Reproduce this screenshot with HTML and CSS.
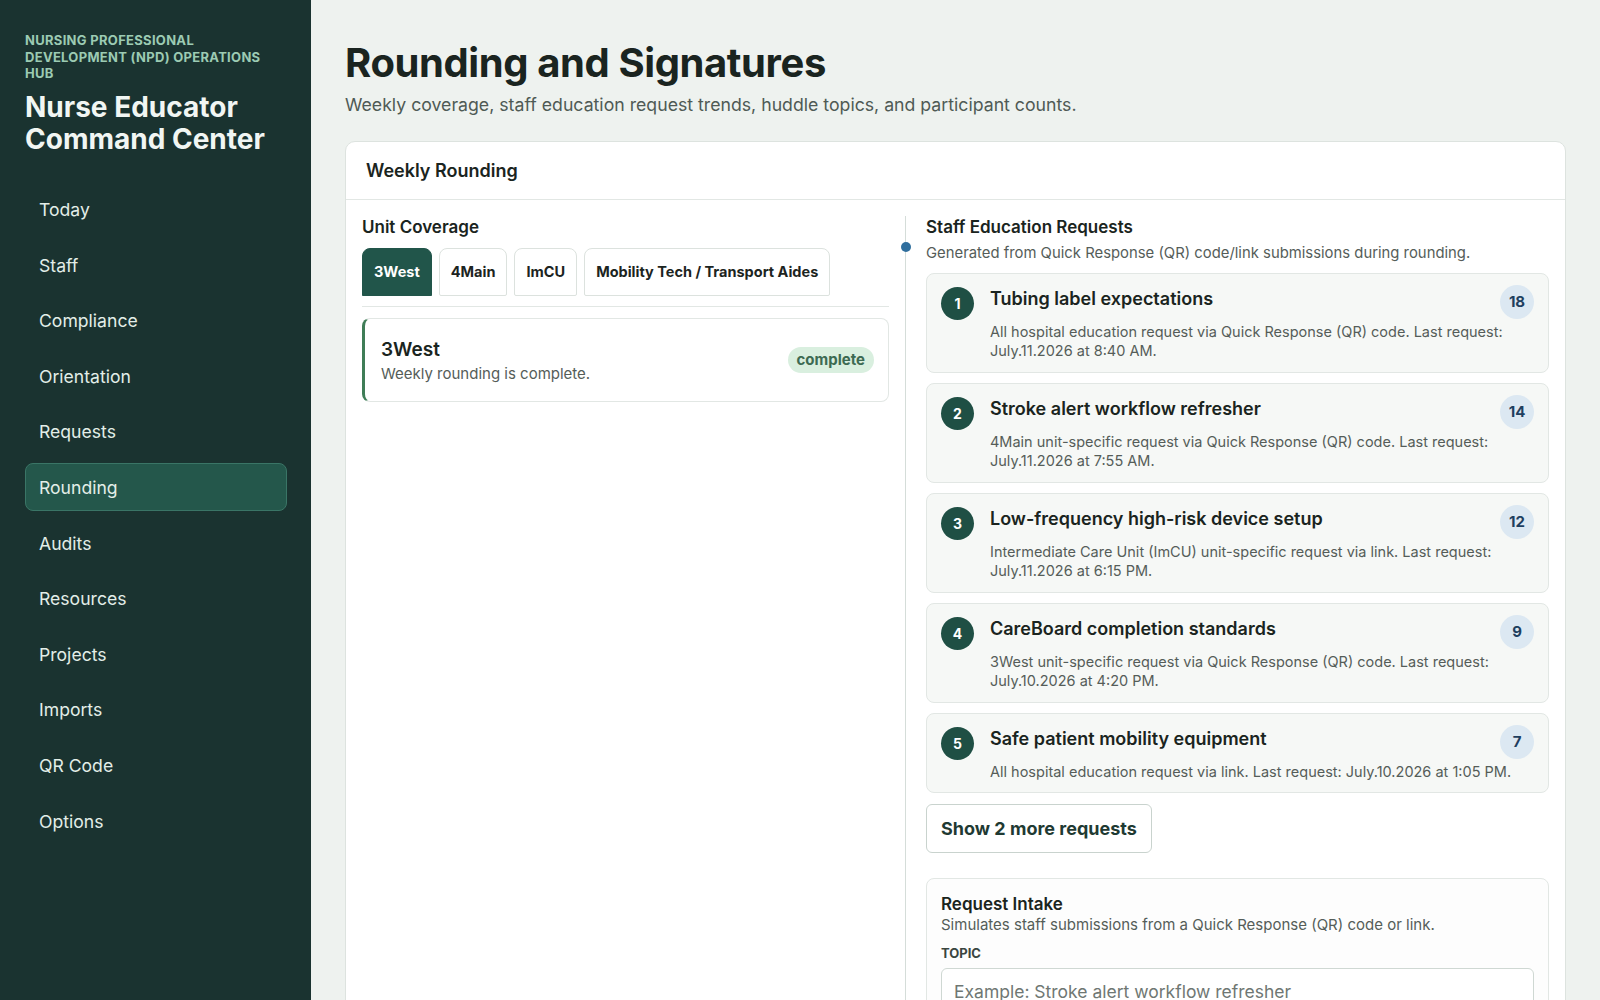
FILE: index.html
```html
<!DOCTYPE html>
<html lang="en">
<head>
    <meta charset="UTF-8">
    <meta name="viewport" content="width=device-width, initial-scale=1.0">
    <title>Rounding and Signatures</title>
    <link rel="stylesheet" href="styles.css">
</head>
<body>
    <aside class="sidebar">
        <div class="eyebrow">Nursing Professional Development (NPD) Operations Hub</div>
        <h1 class="brand">Nurse Educator Command Center</h1>
        <nav class="nav">
            <a class="nav-item">Today</a>
            <a class="nav-item">Staff</a>
            <a class="nav-item">Compliance</a>
            <a class="nav-item">Orientation</a>
            <a class="nav-item">Requests</a>
            <a class="nav-item active">Rounding</a>
            <a class="nav-item">Audits</a>
            <a class="nav-item">Resources</a>
            <a class="nav-item">Projects</a>
            <a class="nav-item">Imports</a>
            <a class="nav-item">QR Code</a>
            <a class="nav-item">Options</a>
        </nav>
    </aside>

    <main class="main">
        <h2 class="page-title">Rounding and Signatures</h2>
        <p class="page-sub">Weekly coverage, staff education request trends, huddle topics, and participant counts.</p>

        <section class="card">
            <div class="card-head">Weekly Rounding</div>
            <div class="card-body">
                <div class="coverage">
                    <h3 class="section-title">Unit Coverage</h3>
                    <div class="tabs">
                        <button class="tab active">3West</button>
                        <button class="tab">4Main</button>
                        <button class="tab">ImCU</button>
                        <button class="tab">Mobility Tech / Transport Aides</button>
                    </div>
                    <div class="unit">
                        <div>
                            <div class="unit-name">3West</div>
                            <div class="unit-note">Weekly rounding is complete.</div>
                        </div>
                        <span class="status">complete</span>
                    </div>
                </div>

                <div class="requests">
                    <span class="marker"></span>
                    <h3 class="section-title">Staff Education Requests</h3>
                    <p class="section-sub">Generated from Quick Response (QR) code/link submissions during rounding.</p>

                    <div class="req-list">
                        <div class="req">
                            <span class="rank">1</span>
                            <div class="req-body">
                                <div class="req-head"><h4>Tubing label expectations</h4><span class="count">18</span></div>
                                <p>All hospital education request via Quick Response (QR) code. Last request: July.11.2026 at 8:40 AM.</p>
                            </div>
                        </div>
                        <div class="req">
                            <span class="rank">2</span>
                            <div class="req-body">
                                <div class="req-head"><h4>Stroke alert workflow refresher</h4><span class="count">14</span></div>
                                <p>4Main unit-specific request via Quick Response (QR) code. Last request: July.11.2026 at 7:55 AM.</p>
                            </div>
                        </div>
                        <div class="req">
                            <span class="rank">3</span>
                            <div class="req-body">
                                <div class="req-head"><h4>Low-frequency high-risk device setup</h4><span class="count">12</span></div>
                                <p>Intermediate Care Unit (ImCU) unit-specific request via link. Last request: July.11.2026 at 6:15 PM.</p>
                            </div>
                        </div>
                        <div class="req">
                            <span class="rank">4</span>
                            <div class="req-body">
                                <div class="req-head"><h4>CareBoard completion standards</h4><span class="count">9</span></div>
                                <p>3West unit-specific request via Quick Response (QR) code. Last request: July.10.2026 at 4:20 PM.</p>
                            </div>
                        </div>
                        <div class="req">
                            <span class="rank">5</span>
                            <div class="req-body">
                                <div class="req-head"><h4>Safe patient mobility equipment</h4><span class="count">7</span></div>
                                <p>All hospital education request via link. Last request: July.10.2026 at 1:05 PM.</p>
                            </div>
                        </div>
                    </div>

                    <button class="more">Show 2 more requests</button>

                    <div class="intake">
                        <h3 class="section-title">Request Intake</h3>
                        <p class="intake-sub">Simulates staff submissions from a Quick Response (QR) code or link.</p>
                        <label class="field-label" for="topic">Topic</label>
                        <input class="field" id="topic" type="text" placeholder="Example: Stroke alert workflow refresher">
                    </div>
                </div>
            </div>
        </section>
    </main>
</body>
</html>
```

FILE: styles.css
```css
* {
    box-sizing: border-box;
}
body {
    margin: 0;
    display: flex;
    min-height: 100vh;
    background: #eef2ef;
    color: #1a2420;
    font-family: Inter, "Noto Sans", sans-serif;
}
h1, h2, h3, h4, p {
    margin: 0;
}

/* sidebar */
.sidebar {
    width: 311px;
    flex-shrink: 0;
    background: #1a3330;
    padding: 32px 24px 32px 25px;
}
.eyebrow {
    font-size: 13px;
    font-weight: 700;
    line-height: 16.5px;
    letter-spacing: 0.3px;
    text-transform: uppercase;
    color: #9ccbb3;
}
.brand {
    margin-top: 9px;
    font-size: 28px;
    font-weight: 700;
    line-height: 32px;
    color: #f1f6f3;
}
.nav {
    margin-top: 31px;
    display: flex;
    flex-direction: column;
    gap: 7.6px;
}
.nav-item {
    height: 48px;
    display: flex;
    align-items: center;
    padding: 0 13px;
    border: 1px solid transparent;
    border-radius: 8px;
    font-size: 17.6px;
    color: #e3eee8;
    cursor: pointer;
}
.nav-item.active {
    background: #24574b;
    border-color: #3a7566;
}

/* main area */
.main {
    flex: 1;
    padding: 39px 34px 40px 34px;
}
.page-title {
    font-size: 40px;
    font-weight: 700;
    line-height: 48px;
    letter-spacing: -0.4px;
}
.page-sub {
    margin-top: 6px;
    font-size: 17.7px;
    line-height: 24px;
    color: #4f5a55;
}
.card {
    margin-top: 24px;
    background: #fff;
    border: 1px solid #dde3df;
    border-radius: 10px;
}
.card-head {
    height: 58px;
    display: flex;
    align-items: center;
    padding: 0 20px;
    border-bottom: 1px solid #e2e7e4;
    font-size: 18px;
    font-weight: 600;
}
.card-body {
    display: grid;
    grid-template-columns: 527px 1fr;
    column-gap: 16px;
    padding: 16px 16px 0 16px;
}
.section-title {
    font-size: 17px;
    font-weight: 600;
    line-height: 22px;
}

/* unit coverage */
.tabs {
    display: flex;
    gap: 7px;
    margin-top: 9.5px;
    padding-bottom: 10px;
    border-bottom: 1px solid #e2e7e4;
}
.tab {
    height: 48px;
    padding: 0 11px;
    background: #fff;
    border: 1px solid #dce2de;
    border-radius: 8px 8px 2px 2px;
    font-family: inherit;
    font-size: 14.5px;
    font-weight: 700;
    color: #1c2421;
    cursor: pointer;
}
.tab.active {
    background: #21554a;
    border-color: #21554a;
    color: #fff;
    border-radius: 8px 8px 0 0;
}
.unit {
    margin-top: 11px;
    height: 84px;
    display: flex;
    align-items: center;
    justify-content: space-between;
    padding: 3px 14px 0 16px;
    border: 1px solid #e2e7e4;
    border-left: 3px solid #3f7d57;
    border-radius: 8px;
}
.unit-name {
    font-size: 19px;
    font-weight: 600;
    line-height: 24px;
}
.unit-note {
    margin-top: 1px;
    font-size: 15px;
    line-height: 21px;
    color: #555d59;
}
.status {
    margin-top: -3px;
    padding: 3px 9px;
    border-radius: 999px;
    background: #d9efdf;
    color: #3d6a52;
    font-size: 15px;
    font-weight: 700;
    line-height: 20px;
}

/* staff education requests */
.requests {
    position: relative;
    border-left: 1px solid #d5ddd9;
    padding-left: 20px;
    padding-bottom: 40px;
}
.marker {
    position: absolute;
    left: -5.5px;
    top: 26px;
    width: 10px;
    height: 10px;
    border-radius: 50%;
    background: #2f6e9d;
}
.section-sub {
    margin-top: 5px;
    font-size: 14.85px;
    line-height: 20px;
    color: #555d59;
}
.req-list {
    margin-top: 9.5px;
    display: flex;
    flex-direction: column;
    gap: 10px;
}
.req {
    display: flex;
    gap: 16px;
    padding: 13px 14px 11px 14px;
    background: #f6f8f6;
    border: 1px solid #e2e7e4;
    border-radius: 8px;
}
.rank {
    width: 33px;
    height: 33px;
    flex-shrink: 0;
    display: flex;
    align-items: center;
    justify-content: center;
    border-radius: 50%;
    background: #1f4f44;
    color: #fff;
    font-size: 14px;
    font-weight: 700;
}
.req-body {
    flex: 1;
}
.req-head {
    display: flex;
    justify-content: space-between;
    align-items: flex-start;
    height: 32px;
}
.req-head h4 {
    font-size: 18px;
    font-weight: 600;
    line-height: 24px;
}
.count {
    width: 34px;
    height: 34px;
    margin-top: -2px;
    display: flex;
    align-items: center;
    justify-content: center;
    border-radius: 50%;
    background: #dce8f2;
    color: #1f3f5f;
    font-size: 15px;
    font-weight: 700;
}
.req-body p {
    margin-top: 3px;
    font-size: 14.5px;
    line-height: 19.5px;
    color: #555d59;
}
.more {
    margin-top: 11px;
    height: 49px;
    padding: 0 14px;
    background: #fff;
    border: 1px solid #c9d3ce;
    border-radius: 6px;
    font-family: inherit;
    font-size: 18px;
    font-weight: 700;
    color: #1f3a33;
    cursor: pointer;
}
.intake {
    margin-top: 25px;
    padding: 14px 14px 20px 14px;
    background: #fdfdfd;
    border: 1px solid #e2e7e4;
    border-radius: 8px;
}
.intake-sub {
    font-size: 15px;
    line-height: 20px;
    color: #555d59;
}
.field-label {
    display: block;
    margin-top: 9px;
    font-size: 13px;
    font-weight: 700;
    line-height: 18px;
    text-transform: uppercase;
    color: #3a4540;
}
.field {
    display: block;
    width: 100%;
    height: 46px;
    margin-top: 6px;
    padding: 0 12px;
    border: 1px solid #cfd8d3;
    border-radius: 6px;
    font-family: inherit;
    font-size: 17.5px;
    color: #1a2420;
}
.field::placeholder {
    color: #6f7773;
}
```
